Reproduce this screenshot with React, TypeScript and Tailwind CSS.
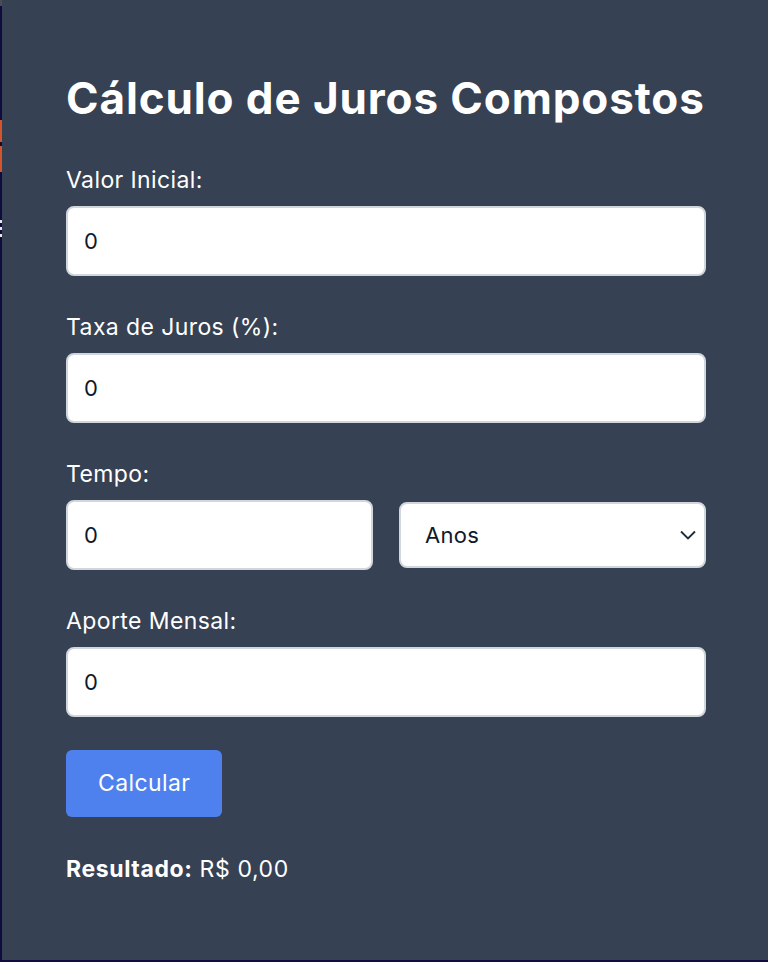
import { useState } from "react";

export default function App() {
  const [valor, setValor] = useState("0");
  const [taxa, setTaxa] = useState("0");
  const [tempo, setTempo] = useState("0");
  const [unidade, setUnidade] = useState("anos");
  const [aporte, setAporte] = useState("0");
  const [resultado, setResultado] = useState(0);

  const calcular = () => {
    const p = parseFloat(valor) || 0;
    const r = (parseFloat(taxa) || 0) / 100 / 12;
    const t = parseFloat(tempo) || 0;
    const n = unidade === "anos" ? t * 12 : t;
    const a = parseFloat(aporte) || 0;
    const fator = Math.pow(1 + r, n);
    const total = r === 0 ? p + a * n : p * fator + a * ((fator - 1) / r);
    setResultado(total);
  };

  const inputCls =
    "w-full h-[70px] rounded-lg border-2 border-gray-300 bg-white px-[16px] text-[22px] tracking-[0.3px] text-gray-900 outline-none";

  return (
    <div className="flex min-h-[962px] w-full flex-col bg-[#0f0b3c] font-['Inter',sans-serif]">
      <div className="flex h-[960px]">
        {/* faixa lateral */}
        <div className="flex w-[2px] flex-col">
          <div className="h-[6px] bg-[#4b4b55]" />
          <div className="h-[114px]" />
          <div className="h-[22px] bg-[#d4552a]" />
          <div className="h-[4px]" />
          <div className="h-[26px] bg-[#d4552a]" />
          <div className="h-[48px]" />
          <div className="h-[3px] bg-gray-200" />
          <div className="h-[4px]" />
          <div className="h-[3px] bg-gray-200" />
          <div className="h-[4px]" />
          <div className="h-[3px] bg-gray-200" />
        </div>

        <main className="flex-1 bg-gray-700 pl-16 pr-[62px] pt-[72px] text-white">
          <h1 className="mb-[42px] whitespace-nowrap text-[44px] leading-[52px] font-bold tracking-[0.9px]">
            Cálculo de Juros Compostos
          </h1>

          <div className="mb-[37px]">
            <label className="mb-3 block text-[23px] leading-7 tracking-[0.4px]">Valor Inicial:</label>
            <input className={inputCls} value={valor} onChange={(e) => setValor(e.target.value)} />
          </div>

          <div className="mb-[37px]">
            <label className="mb-3 block text-[23px] leading-7 tracking-[0.4px]">Taxa de Juros (%):</label>
            <input className={inputCls} value={taxa} onChange={(e) => setTaxa(e.target.value)} />
          </div>

          <div className="mb-[37px]">
            <label className="mb-3 block text-[23px] leading-7 tracking-[0.4px]">Tempo:</label>
            <div className="grid grid-cols-2 items-center gap-[26px]">
              <input className={inputCls} value={tempo} onChange={(e) => setTempo(e.target.value)} />
              <div className="relative">
                <select
                  className="h-[66px] w-full appearance-none rounded-lg border-2 border-gray-300 bg-white px-[24px] text-[22px] tracking-[0.3px] text-gray-900 outline-none"
                  value={unidade}
                  onChange={(e) => setUnidade(e.target.value)}
                >
                  <option value="anos">Anos</option>
                  <option value="meses">Meses</option>
                </select>
                <svg
                  className="pointer-events-none absolute right-[10px] top-1/2 -translate-y-1/2"
                  width="16"
                  height="10"
                  viewBox="0 0 16 10"
                  fill="none"
                  stroke="#1f2937"
                  strokeWidth="1.8"
                >
                  <path d="M1 1.5l7 7 7-7" />
                </svg>
              </div>
            </div>
          </div>

          <div className="mb-[33px]">
            <label className="mb-3 block text-[23px] leading-7 tracking-[0.4px]">Aporte Mensal:</label>
            <input className={inputCls} value={aporte} onChange={(e) => setAporte(e.target.value)} />
          </div>

          <button
            onClick={calcular}
            className="h-[67px] rounded-md bg-[#4e81ee] px-8 text-[23px] tracking-[0.4px] text-white"
          >
            Calcular
          </button>

          <p className="mt-[38px] text-[23px] leading-7 tracking-[0.6px]">
            <span className="font-bold">Resultado:</span> R${" "}
            {resultado.toLocaleString("pt-BR", { minimumFractionDigits: 2, maximumFractionDigits: 2 })}
          </p>
        </main>
      </div>
    </div>
  );
}
